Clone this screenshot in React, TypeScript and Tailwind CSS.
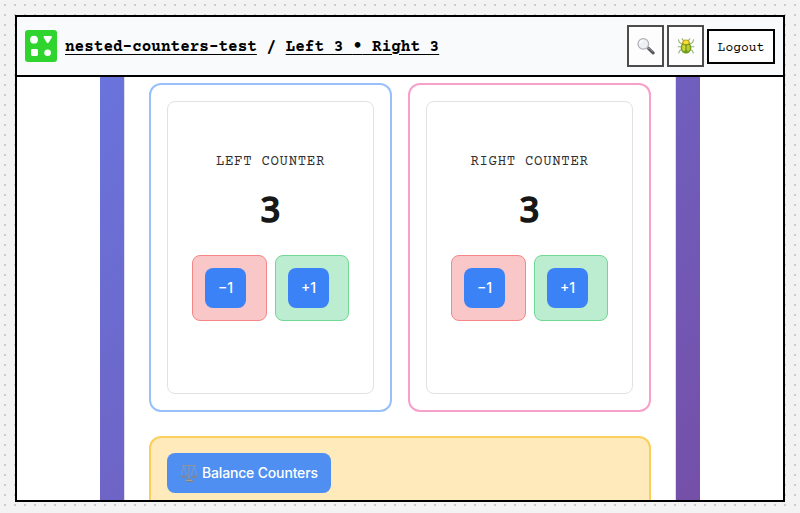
import React from "react";

const MONO = "font-['Courier_Prime','Liberation_Mono',monospace]";

function Logo() {
  return (
    <svg className="block h-8 w-8 shrink-0" viewBox="0 0 32 32">
      <rect width="32" height="32" rx="3" fill="#2fd42f" />
      <g fill="#fff">
        <circle cx="9" cy="9.7" r="3.9" />
        <path d="M19.4 6h6.6q1.4.4.7 1.7l-3.2 5q-.8.9-1.6 0l-3.1-5q-.7-1.3.6-1.7z" />
        <rect x="6" y="19" width="7" height="7" rx="1.4" />
        <circle cx="22.6" cy="22.7" r="3.3" />
      </g>
    </svg>
  );
}

function Magnifier() {
  return (
    <svg className="block h-[18px] w-[18px]" viewBox="0 0 18 18" fill="none">
      <path d="M11.2 11.2l4.9 4.7" stroke="#55555a" strokeWidth="3" strokeLinecap="round" />
      <path d="M9.8 10l2 1.8" stroke="#999" strokeWidth="1.4" />
      <path d="M11.8 11l4 3.7" stroke="#97979d" strokeWidth=".8" />
      <circle cx="6.3" cy="6.9" r="5.3" fill="#eef0f6" stroke="#b0b0b4" strokeWidth="1.2" />
      <path d="M3.1 6.4q.5-2.7 3.2-3.1" stroke="#fff" strokeWidth="1.3" />
    </svg>
  );
}

function Beetle() {
  return (
    <svg className="block h-[18px] w-[18px]" viewBox="0 0 18 18" fill="none">
      <path
        d="M6.6 3.7L5.2 1.8M11.4 3.7l1.4-1.9M4.6 6.8L2.3 5.4 1.5 2.8M13.4 6.8l2.3-1.4.8-2.6M4 9.8H1.2M14 9.8h2.8M4.6 12.5l-2.1 1.4-.7 2.1M13.4 12.5l2.1 1.4.7 2.1"
        stroke="#93b070"
        strokeWidth="1.1"
        strokeLinecap="round"
        strokeLinejoin="round"
      />
      <ellipse cx="9" cy="10.9" rx="5.3" ry="5.7" fill="#6fa023" />
      <path d="M4.8 6.9Q5.2 2.6 9 2.4q3.8.2 4.2 4.5Q9 8.4 4.8 6.9z" fill="#b9a41c" />
      <ellipse cx="9" cy="5.4" rx="2.6" ry="1.8" fill="#f6e030" />
      <ellipse cx="6.9" cy="10.7" rx="1.7" ry="3.2" fill="#d3d433" />
      <ellipse cx="11.1" cy="10.7" rx="1.7" ry="3.2" fill="#c0cc2f" />
      <path d="M9 7.7v8.6M4.8 7.3Q9 8.7 13.2 7.3" stroke="#6b8a1d" strokeWidth=".6" />
    </svg>
  );
}

function Scales() {
  return (
    <svg className="block h-[18px] w-[18px] shrink-0" viewBox="0 0 18 18" fill="none">
      <path d="M2.2 1.5h13.6M9 .8v14.4" stroke="#8d939d" strokeWidth="1.2" />
      <path d="M3.8 1.7L1 11.8M3.8 1.7l3 10.1M14.2 1.7l-3 10.1M14.2 1.7l2.8 10.1" stroke="#8699b8" strokeWidth=".8" />
      <path d="M.3 11.6h7q-.6 2.6-3.5 2.6T.3 11.6zM10.7 11.6h7q-.6 2.6-3.5 2.6t-3.5-2.6z" fill="#7c8698" />
      <path d="M6.6 14.8h4.8v1.2H13V18H5v-2h1.6z" fill="#7a7f88" />
      <path d="M5.5 16.3h7" stroke="#b5b8bd" strokeWidth=".8" />
    </svg>
  );
}

function StepButton({ label, tone }: { label: string; tone: string }) {
  return (
    <div className={`h-[66px] rounded-lg border p-3 ${tone}`}>
      <button className="block h-10 w-[41px] rounded-lg bg-[#3b82f6] text-center font-['Inter',sans-serif] text-sm font-medium text-white">
        {label}
      </button>
    </div>
  );
}

function Counter({ title, value, border }: { title: string; value: number; border: string }) {
  return (
    <section className={`h-[329px] flex-1 rounded-xl border-2 p-4 ${border}`}>
      <div className="flex h-[293px] flex-col items-center rounded-lg border border-[#e2e2e4] pt-[50px]">
        <h2 className={`${MONO} text-sm leading-5 tracking-[0.05em] text-[#303030]`}>{title}</h2>
        <div className="mt-3 h-[50px] font-['Noto_Sans',sans-serif] text-[34px] leading-[50px] font-medium text-[#171717] [-webkit-text-stroke:1.5px_#171717] [stroke-linejoin:round]">
          {value}
        </div>
        <div className="mt-[21px] grid w-[157px] grid-cols-[75px_74px] gap-2">
          <StepButton label="−1" tone="border-[#f58787] bg-[#f9c7c7]" />
          <StepButton label="+1" tone="border-[#6fd892] bg-[#bcedd0]" />
        </div>
      </div>
    </section>
  );
}

export default function App() {
  return (
    <div className="h-[513px] w-[800px] overflow-hidden bg-[#f3f3f3] bg-[linear-gradient(to_right,transparent_2px,#f3f3f3_2px),linear-gradient(#cccccc_2px,transparent_2px)] bg-[length:10px_10px] bg-[position:4px_4px] p-[15px]">
      <div className="flex h-[487px] w-[770px] flex-col border-2 border-black bg-white">
        <header className="flex h-[60px] shrink-0 items-center border-b-2 border-black bg-[#f9fafc] px-2">
          <Logo />
          <div className={`${MONO} ml-2 text-base leading-6 font-bold whitespace-pre text-black`}>
            <a className="underline underline-offset-[3px]">nested-counters-test</a>
            {" / "}
            <a className="underline underline-offset-[3px]">
              Left 3 <span className="font-['DejaVu_Sans_Mono',monospace]">•</span> Right 3
            </a>
          </div>
          <div className="ml-auto flex items-center gap-[3px]">
            <button className="flex h-[42px] w-[37px] items-center justify-center border-2 border-[#4c4c4c] bg-[#fdfdfe]">
              <Magnifier />
            </button>
            <button className="flex h-[42px] w-[37px] items-center justify-center border-2 border-[#4c4c4c] bg-[#fdfdfe]">
              <Beetle />
            </button>
            <button className={`${MONO} h-[35px] w-[68px] border-2 border-black bg-white pt-1.5 text-[13px] text-black`}>
              Logout
            </button>
          </div>
        </header>
        <main className="min-h-0 flex-1 overflow-hidden">
          <div className="mx-auto h-[423px] w-[600px] bg-[linear-gradient(135deg,#667eea_-28%,#764ba2_112%)] px-6">
            <div className="h-full border-x border-[#dedee6] bg-white px-6 pt-1.5">
              <div className="flex gap-4">
                <Counter title="LEFT COUNTER" value={3} border="border-[#98c0fb]" />
                <Counter title="RIGHT COUNTER" value={3} border="border-[#f6a0cb]" />
              </div>
              <div className="mt-6 h-24 rounded-xl border-2 border-[#fccf5d] bg-[#feeaba] px-4 pt-[15px]">
                <button className="flex h-10 w-[164px] items-center rounded-lg bg-[#4f8ff1] pl-[13px] font-['Inter',sans-serif] text-sm font-medium tracking-[-0.012em] whitespace-nowrap text-white">
                  <Scales />
                  <span className="ml-1">Balance Counters</span>
                </button>
              </div>
            </div>
          </div>
        </main>
      </div>
    </div>
  );
}
